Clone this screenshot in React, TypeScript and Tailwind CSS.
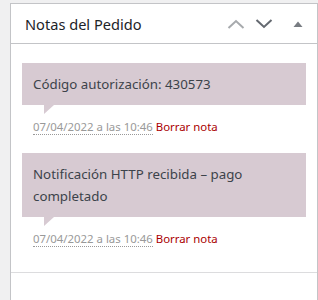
import React from 'react';

type Note = { id: number; text: string; date: string };

const notes: Note[] = [
  { id: 1, text: 'Código autorización: 430573', date: '07/04/2022 a las 10:46' },
  { id: 2, text: 'Notificación HTTP recibida – pago completado', date: '07/04/2022 a las 10:46' },
];

function Chevron({ up, color }: { up?: boolean; color: string }) {
  return (
    <svg width="18" height="10" viewBox="0 0 18 10" className="block">
      <path
        d={up ? 'M1.5 9 L9 2 L16.5 9' : 'M1.5 1 L9 8 L16.5 1'}
        fill="none"
        stroke={color}
        strokeWidth="2"
      />
    </svg>
  );
}

export default function App() {
  return (
    <div
      className="h-[300px] bg-[#f0f0f1] pt-[3px] pl-[10px] overflow-hidden"
      style={{ fontFamily: '"Noto Sans", "Open Sans", sans-serif' }}
    >
      <div className="w-[308px] h-[320px] border border-[#c3c4c7] bg-white">
        <div className="h-[40px] border-b border-[#c3c4c7] flex items-center pl-[14px] pr-[14px]">
          <h2 className="text-[14.6px] text-[#1d2327] flex-1 leading-none pt-[2px]">Notas del Pedido</h2>
          <div className="flex items-center">
            <span className="mr-[10px]">
              <Chevron up color="#a7aaad" />
            </span>
            <span className="mr-[20px]">
              <Chevron color="#646970" />
            </span>
            <svg width="10" height="6" viewBox="0 0 10 6" className="block">
              <path d="M0.5 6 L5 0.5 L9.5 6 Z" fill="#787c82" />
            </svg>
          </div>
        </div>

        <ul className="pt-[19px] px-[11px]">
          {notes.map((note) => (
            <li key={note.id} className="mb-[17px]">
              <div className="relative bg-[#d7cad2] px-[11px] py-[10px] text-[13.3px] leading-[22px] text-[#3c434a]">
                <p>{note.text}</p>
                <span className="absolute left-[22px] -bottom-[9px] w-0 h-0 border-solid border-t-[9px] border-r-[10px] border-t-[#d7cad2] border-r-transparent" />
              </div>
              <p className="pt-[13px] px-[11px] text-[11.4px] leading-[18px] text-[#999]">
                <abbr className="no-underline border-b border-dotted border-[#999]">{note.date}</abbr>{' '}
                <a href="#" className="text-[#a00]">Borrar nota</a>
              </p>
            </li>
          ))}
        </ul>

        <div className="mt-[24px] border-t border-[#dcdcde]" />
      </div>
    </div>
  );
}
